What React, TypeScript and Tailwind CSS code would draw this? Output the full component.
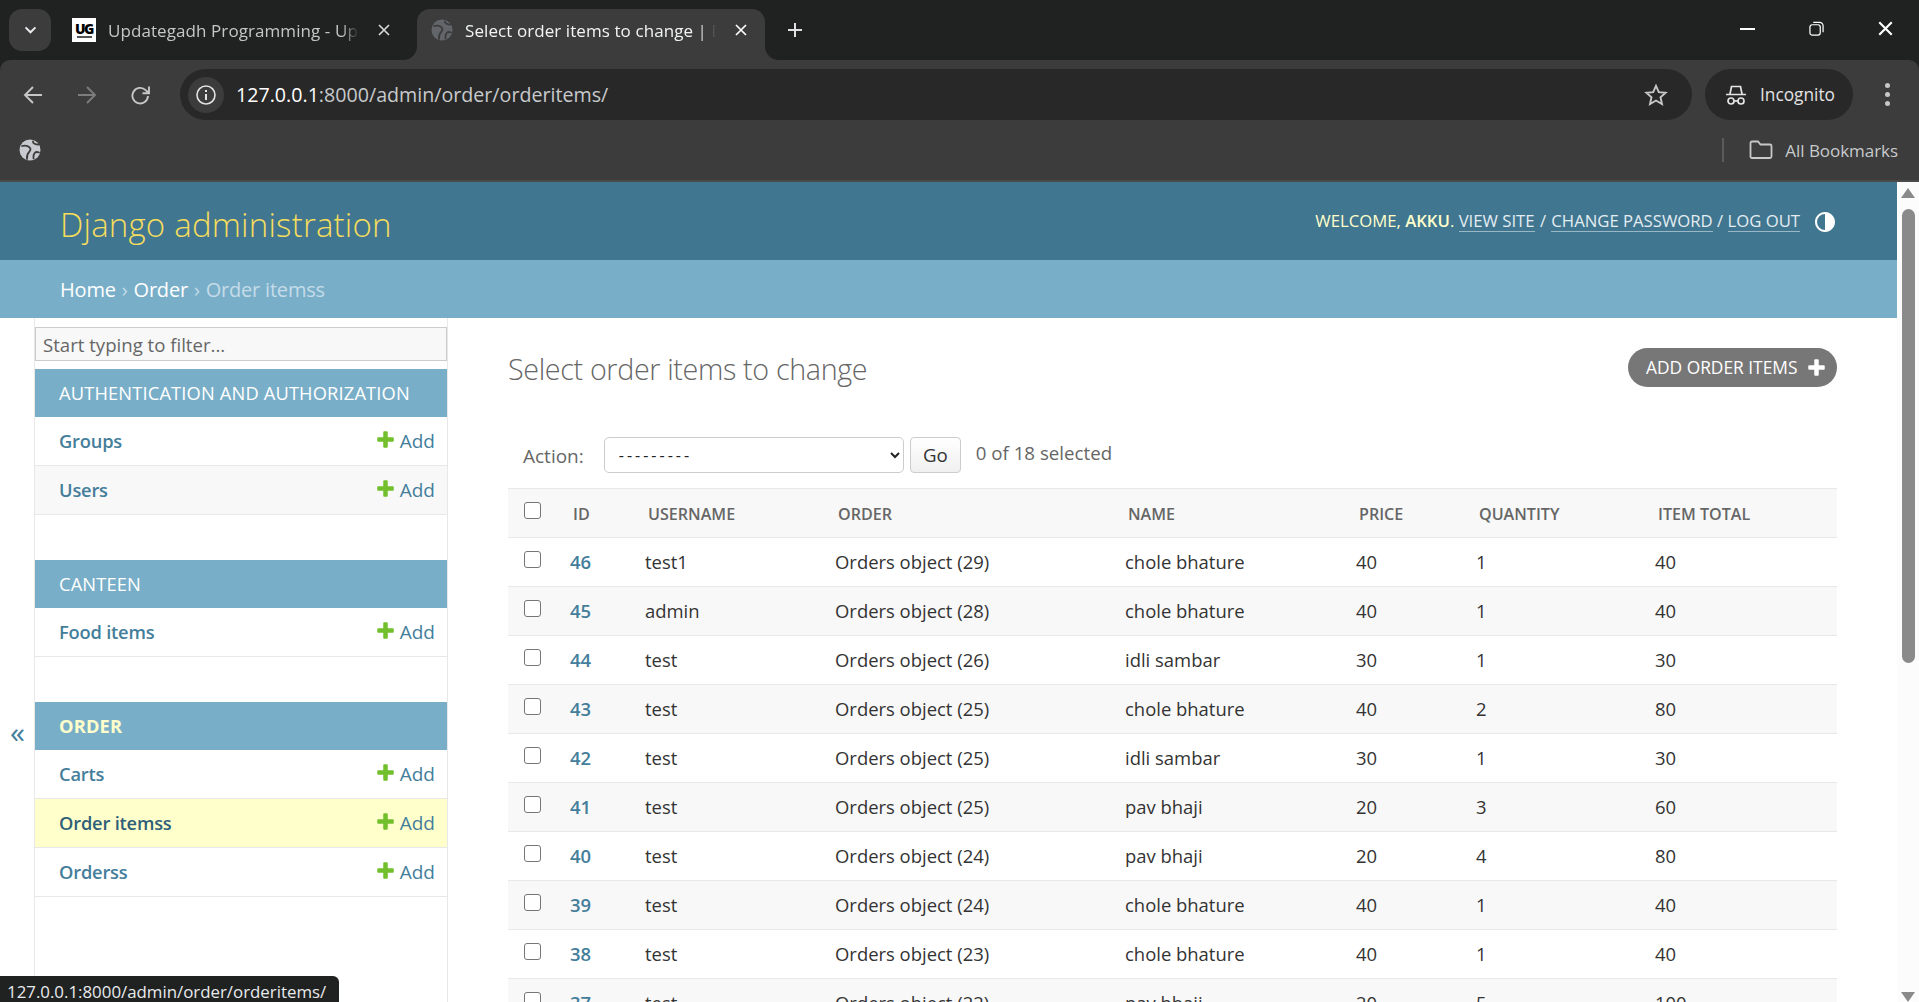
const rows = [
  ["46", "test1", "Orders object (29)", "chole bhature", "40", "1", "40"],
  ["45", "admin", "Orders object (28)", "chole bhature", "40", "1", "40"],
  ["44", "test", "Orders object (26)", "idli sambar", "30", "1", "30"],
  ["43", "test", "Orders object (25)", "chole bhature", "40", "2", "80"],
  ["42", "test", "Orders object (25)", "idli sambar", "30", "1", "30"],
  ["41", "test", "Orders object (25)", "pav bhaji", "20", "3", "60"],
  ["40", "test", "Orders object (24)", "pav bhaji", "20", "4", "80"],
  ["39", "test", "Orders object (24)", "chole bhature", "40", "1", "40"],
  ["38", "test", "Orders object (23)", "chole bhature", "40", "1", "40"],
  ["37", "test", "Orders object (22)", "pav bhaji", "20", "5", "100"],
];

const modules = [
  { title: "AUTHENTICATION AND AUTHORIZATION", items: ["Groups", "Users"] },
  { title: "CANTEEN", items: ["Food items"] },
  { title: "ORDER", items: ["Carts", "Order itemss", "Orderss"], current: true },
];

function Plus({ className }: { className: string }) {
  return (
    <svg viewBox="0 0 1792 1792" className={className} fill="currentColor">
      <path d="M1600 796v192q0 40-28 68t-68 28h-416v416q0 40-28 68t-68 28h-192q-40 0-68-28t-28-68v-416h-416q-40 0-68-28t-28-68v-192q0-40 28-68t68-28h416v-416q0-40 28-68t68-28h192q40 0 68 28t28 68v416h416q40 0 68 28t28 68z" />
    </svg>
  );
}

function Globe({ fill, cut, className }: { fill: string; cut: string; className: string }) {
  return (
    <svg viewBox="0 0 22 22" className={className}>
      <circle cx="11" cy="11" r="10.5" fill={fill} />
      <g fill="none" stroke={cut} strokeWidth="1.800" strokeLinecap="round">
        <path d="M3 7C7 5.800 11 7.300 11.500 10 12 13 7 13 8 20" />
        <path d="M14 2.500C13.800 4.500 16.500 5.500 19.500 5.500" />
        <path d="M20 13.500C16.500 12 14 14 14.500 19.500" />
      </g>
    </svg>
  );
}

function Tab({ children }: { children: React.ReactNode }) {
  return (
    <span className="block w-[251px] overflow-hidden whitespace-nowrap [mask-image:linear-gradient(to_right,black_93%,transparent)]">
      {children}
    </span>
  );
}

function CloseX({ className }: { className: string }) {
  return (
    <svg viewBox="0 0 12 12" className={className} fill="none" stroke="currentColor" strokeWidth="1.700">
      <path d="M1 1l10 10M11 1L1 11" />
    </svg>
  );
}

function Check({ className = "" }: { className?: string }) {
  return (
    <input
      type="checkbox"
      className={`block w-[17px] h-[17px] appearance-none bg-white border-[1.5px] border-[#767676] rounded-[3px] ${className}`}
    />
  );
}

export default function App() {
  return (
    <div className="relative w-[1919px] h-[1002px] overflow-hidden flex flex-col bg-white font-['Open_Sans',sans-serif]">
      {/* Tab strip */}
      <div className="h-[60px] shrink-0 bg-[#202222] flex items-start text-[17px] tracking-[0.08px]">
        <div className="ml-[9px] mt-[9px] w-[42px] h-[42px] rounded-[13px] bg-[#3c3c3c] flex items-center justify-center text-[#e8eaed]">
          <svg viewBox="0 0 14 10" className="w-[13px] h-[9px]" fill="none" stroke="currentColor" strokeWidth="2.200">
            <path d="M1.500 1.500L7 7l5.500-5.500" />
          </svg>
        </div>
        <div className="ml-[21px] mt-[18px] w-[24px] h-[24px] bg-white flex flex-col items-center justify-center overflow-hidden text-black font-extrabold text-[14px] tracking-[-1.500px] leading-none">
          <span className="leading-[13px]">UG</span>
          <span className="block w-[15px] h-[2px] bg-[#555] mt-[1px]" />
        </div>
        <div className="ml-[12px] mt-[19px] text-[#c4c7c5] leading-[24px]">
          <Tab>Updategadh Programming - Updategadh</Tab>
        </div>
        <div className="ml-[19px] mt-[24px] text-[#d5d7d8]">
          <CloseX className="w-[12px] h-[12px]" />
        </div>
        <div className="relative ml-[27px] mt-[9px] w-[348px] h-[51px] bg-[#3c3c3c] rounded-t-[13px] flex items-start">
          <svg viewBox="0 0 14 14" className="absolute left-[-14px] bottom-0 w-[14px] h-[14px]">
            <path d="M14 0v14H0c8 0 14-6 14-14z" fill="#3c3c3c" />
          </svg>
          <svg viewBox="0 0 14 14" className="absolute right-[-14px] bottom-0 w-[14px] h-[14px]">
            <path d="M0 0v14h14C6 14 0 8 0 0z" fill="#3c3c3c" />
          </svg>
          <Globe fill="#62666b" cut="#3c3c3c" className="ml-[14px] mt-[10px] w-[22px] h-[22px] shrink-0" />
          <div className="ml-[12px] mt-[10px] text-[#f1f3f4] leading-[24px]">
            <Tab>Select order items to change | Django site admin</Tab>
          </div>
          <div className="ml-[19px] mt-[15px] text-white">
            <CloseX className="w-[12px] h-[12px]" />
          </div>
        </div>
        <div className="ml-[22px] mt-[22px] text-[#dfe1e3]">
          <svg viewBox="0 0 16 16" className="w-[16px] h-[16px]" fill="none" stroke="currentColor" strokeWidth="2">
            <path d="M8 1v14M1 8h14" />
          </svg>
        </div>
        <div className="ml-auto mt-[21px] flex items-center text-white">
          <div className="w-[15px] h-[2px] bg-white mr-[54px]" />
          <svg viewBox="0 0 16 16" className="w-[15px] h-[15px] mr-[54px]" fill="none" stroke="currentColor" strokeWidth="1.300">
            <rect x="1" y="4" width="11" height="11" rx="2.500" />
            <path d="M4.500 1.500h7a3.500 3.500 0 0 1 3.500 3.500v7" />
          </svg>
          <CloseX className="w-[15px] h-[15px] mr-[26px]" />
        </div>
      </div>

      {/* Toolbar */}
      <div className="h-[60px] shrink-0 bg-[#202222]">
        <div className="h-[60px] bg-[#3c3c3c] rounded-t-[10px] pt-[9px] flex items-start">
          <div className="h-[51px] flex items-center text-[#c7c7c7]">
            <svg viewBox="0 0 20 20" className="ml-[23px] w-[20px] h-[20px]" fill="none" stroke="currentColor" strokeWidth="1.900">
              <path d="M19 10H2M10 2l-8 8 8 8" />
            </svg>
            <svg viewBox="0 0 20 20" className="ml-[34px] w-[20px] h-[20px] text-[#7c7c7c]" fill="none" stroke="currentColor" strokeWidth="1.900">
              <path d="M1 10h17M10 2l8 8-8 8" />
            </svg>
            <svg viewBox="0 0 20 20" className="ml-[34px] w-[20px] h-[20px]" fill="none" stroke="currentColor" strokeWidth="1.900">
              <path d="M17 11a7.800 7.800 0 1 1-2.300-5.900L18 8.200M18 1.500v6.700h-6.500" />
            </svg>
          </div>
          <div className="ml-[29px] w-[1512px] h-[51px] rounded-full bg-[#282828] flex items-center">
            <div className="ml-[8px] w-[36px] h-[36px] rounded-full bg-[#3c3c3c] flex items-center justify-center text-[#e3e3e3]">
              <svg viewBox="0 0 20 20" className="w-[20px] h-[20px]" fill="none" stroke="currentColor" strokeWidth="1.600">
                <circle cx="10" cy="10" r="9" />
                <path d="M10 9v6M10 5v2" strokeWidth="2" />
              </svg>
            </div>
            <div className="ml-[12px] text-[19.650px] leading-none text-white">
              127.0.0.1<span className="text-[#c7cacc]">:8000/admin/order/orderitems/</span>
            </div>
            <svg viewBox="0 0 24 24" className="ml-auto mr-[24px] w-[24px] h-[24px] text-[#c7c7c7]" fill="none" stroke="currentColor" strokeWidth="1.900">
              <path d="M12 2.800l2.800 6.300 6.800.7-5.100 4.500 1.500 6.700-6-3.500-6 3.500 1.500-6.700-5.100-4.500 6.800-.7z" />
            </svg>
          </div>
          <div className="ml-[13px] w-[148px] h-[51px] rounded-full bg-[#282828] flex items-center text-[#e3e3e3]">
            <svg viewBox="0 0 22 22" className="ml-[20px] w-[22px] h-[22px]" fill="none" stroke="currentColor" strokeWidth="1.700">
              <path d="M1 10.500h20M5 10l1.500-7.500h9L17 10" />
              <circle cx="6" cy="17" r="3" />
              <circle cx="16" cy="17" r="3" />
              <path d="M9 17h4" />
            </svg>
            <span className="ml-[13px] text-[17.300px] leading-none">Incognito</span>
          </div>
          <div className="h-[51px] ml-[32px] flex flex-col items-center justify-center gap-[4px]">
            <span className="block w-[5px] h-[5px] rounded-full bg-[#c7c7c7]" />
            <span className="block w-[5px] h-[5px] rounded-full bg-[#c7c7c7]" />
            <span className="block w-[5px] h-[5px] rounded-full bg-[#c7c7c7]" />
          </div>
        </div>
      </div>

      {/* Bookmarks bar */}
      <div className="h-[62px] shrink-0 bg-[#3c3c3c] flex items-center border-b-[2px] border-[#4a4a4a]">
        <Globe fill="#c7cace" cut="#3c3c3c" className="ml-[19px] w-[22px] h-[22px]" />
        <div className="ml-auto w-[2px] h-[24px] bg-[#5b5b5b]" />
        <svg viewBox="0 0 24 20" className="ml-[25px] w-[24px] h-[20px] text-[#c7c7c7]" fill="none" stroke="currentColor" strokeWidth="1.800">
          <path d="M1.500 3a1.500 1.500 0 0 1 1.500-1.500h6l2.500 3H21a1.500 1.500 0 0 1 1.500 1.500v10.500a1.500 1.500 0 0 1-1.500 1.500H3a1.500 1.500 0 0 1-1.500-1.500z" />
        </svg>
        <span className="ml-[12px] mr-[21px] text-[17px] leading-none tracking-[-0.05px] text-[#c7cacc]">All Bookmarks</span>
      </div>

      {/* Page */}
      <div className="flex-1 min-h-0 flex bg-white">
        <div className="w-[1897px] shrink-0 flex flex-col">
          <div className="h-[78px] shrink-0 bg-[#417690] flex items-center pl-[60px]">
            <div className="text-[33px] font-light leading-none text-[#f5dd5d] tracking-[0.2px] pt-[6px]">
              Django administration
            </div>
            <div className="ml-auto flex items-center mr-[60px] text-[16.700px] leading-none text-[#ffffcc]">
              <div className="flex items-baseline pt-[3px]">
                <span>WELCOME,&nbsp;</span>
                <span className="font-semibold">AKKU</span>
                <span>.&nbsp;</span>
                <span className="text-[#e4edf2] border-b border-[#9ab7c6] pb-[2px]">VIEW SITE</span>
                <span className="text-[#e4edf2] mx-[1px]">&nbsp;/&nbsp;</span>
                <span className="text-[#e4edf2] border-b border-[#9ab7c6] pb-[2px]">CHANGE PASSWORD</span>
                <span className="text-[#e4edf2]">&nbsp;/&nbsp;</span>
                <span className="text-[#e4edf2] border-b border-[#9ab7c6] pb-[2px]">LOG OUT</span>
              </div>
              <svg viewBox="0 0 24 24" className="ml-[13px] mt-[2px] w-[24px] h-[24px] text-white" fill="currentColor" fillRule="evenodd">
                <path d="M12 22C6.477 22 2 17.523 2 12S6.477 2 12 2s10 4.477 10 10-4.477 10-10 10zm0-2V4a8 8 0 1 0 0 16z" />
              </svg>
            </div>
          </div>
          <div className="h-[58px] shrink-0 bg-[#79aec8] flex items-center pl-[60px] pt-[1px] text-[20px] tracking-[-0.2px] leading-none text-[#c4dce8]">
            <span className="text-white">Home</span>
            <span className="mx-[1px]">&nbsp;›&nbsp;</span>
            <span className="text-white">Order</span>
            <span className="mx-[1px]">&nbsp;›&nbsp;</span>
            <span>Order itemss</span>
          </div>
          <div className="flex-1 min-h-0 flex">
            <div className="w-[34px] shrink-0 pt-[399px] text-center text-[#447e9b] text-[30px] leading-none pl-[1px]">«</div>
            <div className="w-[414px] shrink-0 border-x border-[#e8e8e8] pt-[9px]">
              <div className="h-[34px] w-full border border-[#cccccc] bg-[#f8f8f8] flex items-center pl-[7px] pt-[2px] text-[#666] text-[18.600px] leading-none">
                Start typing to filter...
              </div>
              <div className="mt-[8px] flex flex-col gap-[45px]">
                {modules.map((m) => (
                  <div key={m.title}>
                    <div className={`h-[48px] bg-[#79aec8] flex items-center pl-[24px] text-[18.300px] leading-none tracking-[0.15px] ${m.current ? "font-bold text-[#ffffcc]" : "text-white"}`}>
                      {m.title}
                    </div>
                    {m.items.map((it, i) => {
                      const sel = it === "Order itemss";
                      return (
                        <div
                          key={it}
                          className={`h-[49px] border-b border-[#e8e8e8] flex items-center pl-[24px] pr-[12px] text-[18.300px] leading-none tracking-[-0.2px] ${sel ? "bg-[#ffffcc]" : i % 2 === 1 ? "bg-[#f8f8f8]" : "bg-white"}`}
                        >
                          <span className={`font-semibold ${sel ? "text-[#2f5f78]" : "text-[#447e9b]"}`}>{it}</span>
                          <Plus className="ml-auto w-[21px] h-[21px] text-[#70bf2b] -mt-[3px]" />
                          <span className="ml-[4px] text-[19px] tracking-normal text-[#447e9b]">Add</span>
                        </div>
                      );
                    })}
                  </div>
                ))}
              </div>
            </div>
            <div className="flex-1 min-w-0 pl-[60px] pr-[60px]">
              <div className="flex items-start justify-between h-[119px]">
                <div className="mt-[33px] text-[28.700px] font-light leading-[36px] tracking-[-0.35px] text-[#666]">
                  Select order items to change
                </div>
                <div className="mt-[30px] w-[209px] h-[39px] rounded-full bg-[#777777] flex items-center pl-[18px] text-white text-[17.350px] leading-none">
                  ADD ORDER ITEMS
                  <Plus className="ml-auto mr-[10px] w-[21px] h-[21px] text-white" />
                </div>
              </div>
              <div className="h-[51px] flex items-start">
                <span className="ml-[15px] mt-[7px] text-[19px] leading-[24px] text-[#666]">Action:</span>
                <select
                  defaultValue=""
                  className="ml-[20px] w-[300px] h-[36px] bg-white border border-[#cccccc] rounded-[5px] pl-[10px] text-[16px] tracking-[3px] text-[#222]"
                >
                  <option value="">---------</option>
                </select>
                <div className="ml-[6px] w-[51px] h-[36px] rounded-[4px] border border-[#cccccc] bg-gradient-to-b from-white to-[#f0f0f0] flex items-center justify-center text-[18.700px] tracking-[-0.2px] leading-none text-[#333]">
                  Go
                </div>
                <span className="ml-[15px] mt-[4px] text-[18.700px] leading-[24px] text-[#666]">0 of 18 selected</span>
              </div>
              <table className="table-fixed w-[1329px] border-collapse text-[18.450px] text-[#333]">
                <colgroup>
                  <col className="w-[52px]" />
                  <col className="w-[75px]" />
                  <col className="w-[190px]" />
                  <col className="w-[290px]" />
                  <col className="w-[231px]" />
                  <col className="w-[120px]" />
                  <col className="w-[179px]" />
                  <col className="w-[192px]" />
                </colgroup>
                <thead>
                  <tr className="h-[49px] bg-[#f8f8f8] border-y border-[#e8e8e8]">
                    <th className="p-0 align-middle">
                      <Check className="ml-[16px] mb-[5px]" />
                    </th>
                    {["ID", "USERNAME", "ORDER", "NAME", "PRICE", "QUANTITY", "ITEM TOTAL"].map((h) => (
                      <th key={h} className="p-0 pl-[13px] pt-[2px] text-left font-semibold text-[16.100px] text-[#666] align-middle">
                        {h}
                      </th>
                    ))}
                  </tr>
                </thead>
                <tbody>
                  {rows.map((r, i) => (
                    <tr key={r[0]} className={`h-[49px] border-b border-[#e8e8e8] ${i % 2 ? "bg-[#f8f8f8]" : "bg-white"}`}>
                      <td className="p-0 align-middle">
                        <Check className="ml-[16px] mb-[5px]" />
                      </td>
                      <td className="p-0 pl-[10px] font-semibold text-[#447e9b] align-middle">{r[0]}</td>
                      {r.slice(1).map((c, j) => (
                        <td key={j} className="p-0 pl-[10px] align-middle whitespace-nowrap">
                          {c}
                        </td>
                      ))}
                    </tr>
                  ))}
                </tbody>
              </table>
            </div>
          </div>
        </div>
        {/* Scrollbar */}
        <div className="w-[22px] shrink-0 bg-[#fcfcfc] flex flex-col items-center relative">
          <svg viewBox="0 0 14 10" className="mt-[6px] w-[14px] h-[10px] text-[#8a8a8a]" fill="currentColor">
            <path d="M7 0l7 10H0z" />
          </svg>
          <div className="mt-[11px] w-[13px] h-[454px] rounded-full bg-[#8a8a8a]" />
          <svg viewBox="0 0 14 10" className="mt-auto w-[14px] h-[10px] text-[#8a8a8a]" fill="currentColor">
            <path d="M7 10L0 0h14z" />
          </svg>
        </div>
      </div>

      {/* Link status bubble */}
      <div className="absolute left-0 bottom-0 h-[26px] w-[339px] bg-[#202222] rounded-tr-[6px] pl-[7px] pt-[8px] text-[16.850px] leading-none text-[#e8eaed] whitespace-nowrap">
        127.0.0.1:8000/admin/order/orderitems/
      </div>
    </div>
  );
}
